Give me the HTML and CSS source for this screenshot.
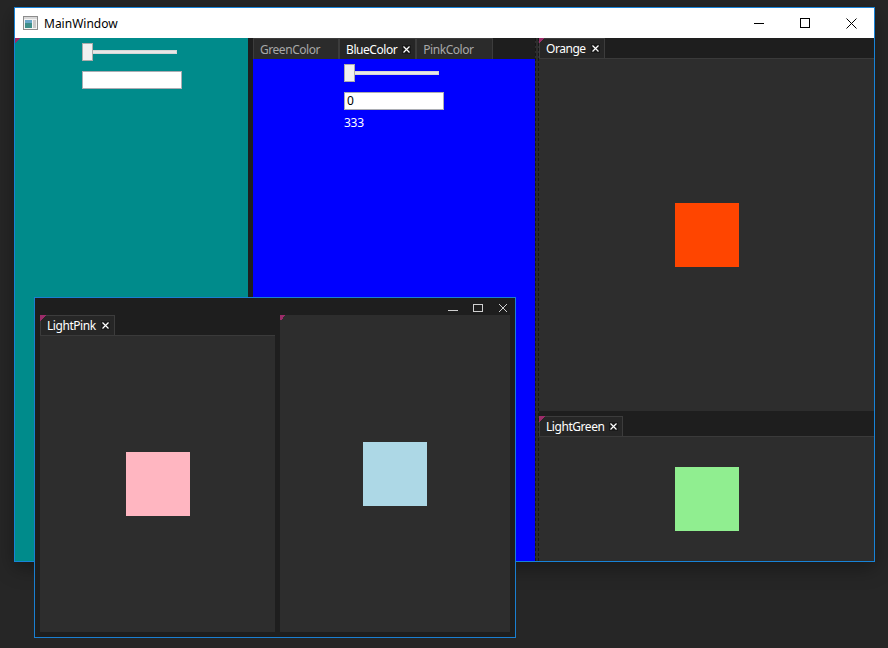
FILE: index.html
```html
<!DOCTYPE html>
<html>
<head>
<meta charset="utf-8">
<title>MainWindow</title>
<link rel="stylesheet" href="styles.css">
</head>
<body>
<div class="win main">
  <div class="titlebar">
    <svg class="app-icon" width="15" height="14" viewBox="0 0 15 14">
      <rect x="0.5" y="0.5" width="14" height="13" fill="#f4f4f4" stroke="#8c8c8c"/>
      <rect x="1" y="1" width="13" height="2" fill="#d8d8d8"/>
      <rect x="2" y="4" width="7" height="8" fill="#3f8f8a"/>
      <rect x="2" y="4" width="7" height="3" fill="#6aa7c9"/>
      <rect x="10" y="4" width="3" height="8" fill="#c9c9c9"/>
    </svg>
    <span class="title">MainWindow</span>
    <div class="caption">
      <div class="cbtn"><svg width="10" height="10" viewBox="0 0 10 10"><line x1="0" y1="5.5" x2="10" y2="5.5" stroke="#000" stroke-width="1"/></svg></div>
      <div class="cbtn"><svg width="10" height="10" viewBox="0 0 10 10"><rect x="0.5" y="0.5" width="9" height="9" fill="none" stroke="#000" stroke-width="1"/></svg></div>
      <div class="cbtn"><svg width="11" height="11" viewBox="0 0 11 11"><path d="M0.5 0.5 L10.5 10.5 M10.5 0.5 L0.5 10.5" stroke="#000" stroke-width="1"/></svg></div>
    </div>
  </div>
  <div class="content">
    <div class="pane teal">
      <span class="marker"></span>
      <div class="slider"><span class="thumb"></span><span class="track"></span></div>
      <div class="textbox"></div>
    </div>
    <div class="mid">
      <div class="tabstrip">
        <div class="tab"><span>GreenColor</span><span class="x"><svg width="7" height="7" viewBox="0 0 7 7"><path d="M0.5 0.5 L6.5 6.5 M6.5 0.5 L0.5 6.5" stroke="#fff" stroke-width="1.2"/></svg></span></div>
        <div class="tab active"><span>BlueColor</span><span class="x"><svg width="7" height="7" viewBox="0 0 7 7"><path d="M0.5 0.5 L6.5 6.5 M6.5 0.5 L0.5 6.5" stroke="#fff" stroke-width="1.2"/></svg></span></div>
        <div class="tab"><span>PinkColor</span><span class="x"><svg width="7" height="7" viewBox="0 0 7 7"><path d="M0.5 0.5 L6.5 6.5 M6.5 0.5 L0.5 6.5" stroke="#fff" stroke-width="1.2"/></svg></span></div>
      </div>
      <div class="blue">
        <div class="slider"><span class="thumb"></span><span class="track"></span></div>
        <div class="textbox">0</div>
        <div class="value">333</div>
      </div>
    </div>
    <div class="splitter"></div>
    <div class="rightcol">
      <div class="dock dock-top">
        <span class="marker"></span>
        <div class="dstrip">
          <div class="tab active"><span>Orange</span><span class="x"><svg width="7" height="7" viewBox="0 0 7 7"><path d="M0.5 0.5 L6.5 6.5 M6.5 0.5 L0.5 6.5" stroke="#fff" stroke-width="1.2"/></svg></span></div>
        </div>
        <div class="dbody"><div class="sq orange"></div></div>
      </div>
      <div class="dock dock-bottom">
        <span class="marker"></span>
        <div class="dstrip">
          <div class="tab active"><span>LightGreen</span><span class="x"><svg width="7" height="7" viewBox="0 0 7 7"><path d="M0.5 0.5 L6.5 6.5 M6.5 0.5 L0.5 6.5" stroke="#fff" stroke-width="1.2"/></svg></span></div>
        </div>
        <div class="dbody"><div class="sq lightgreen"></div></div>
      </div>
    </div>
  </div>
</div>

<div class="win float">
  <div class="ftitle">
    <div class="fbtn"><svg width="10" height="10" viewBox="0 0 10 10"><line x1="0" y1="8.5" x2="10" y2="8.5" stroke="#d0d0d0" stroke-width="1"/></svg></div>
    <div class="fbtn"><svg width="10" height="10" viewBox="0 0 10 10"><rect x="0.5" y="2.5" width="9" height="7" fill="none" stroke="#d0d0d0" stroke-width="1"/></svg></div>
    <div class="fbtn"><svg width="10" height="10" viewBox="0 0 10 10"><path d="M1 2 L9 10 M9 2 L1 10" stroke="#d0d0d0" stroke-width="1"/></svg></div>
  </div>
  <div class="fbody">
    <div class="dock fleft">
      <span class="marker"></span>
      <div class="dstrip">
        <div class="tab active"><span>LightPink</span><span class="x"><svg width="7" height="7" viewBox="0 0 7 7"><path d="M0.5 0.5 L6.5 6.5 M6.5 0.5 L0.5 6.5" stroke="#fff" stroke-width="1.2"/></svg></span></div>
      </div>
      <div class="dbody"><div class="sq lightpink"></div></div>
    </div>
    <div class="dock fright">
      <span class="marker"></span>
      <div class="dbody"><div class="sq lightblue"></div></div>
    </div>
  </div>
</div>
</body>
</html>
```

FILE: styles.css
```css
* { box-sizing: border-box; }

body {
  margin: 0;
  width: 888px;
  height: 648px;
  overflow: hidden;
  position: relative;
  background: #262626;
  font-family: "Noto Sans", "Open Sans", sans-serif;
  font-size: 12px;
  letter-spacing: -0.25px;
}

.win {
  position: absolute;
  border: 1px solid #1883d7;
  background: #1e1e1e;
  display: flex;
  flex-direction: column;
}

.main {
  left: 14px;
  top: 7px;
  width: 861px;
  height: 555px;
  box-shadow: 0 6px 18px rgba(0, 0, 0, 0.35);
}

.titlebar {
  height: 30px;
  flex: none;
  background: #fff;
  display: flex;
  align-items: center;
}

.app-icon { margin-left: 8px; }

.title {
  margin-left: 6px;
  color: #000;
  letter-spacing: 0;
}

.caption {
  margin-left: auto;
  display: flex;
  height: 100%;
}

.cbtn {
  width: 46px;
  display: flex;
  align-items: center;
  justify-content: center;
}

.content {
  flex: 1;
  display: flex;
  min-height: 0;
}

.marker {
  position: absolute;
  left: 0;
  top: 0;
  width: 6px;
  height: 6px;
  background: linear-gradient(135deg, #9b2c69 50%, transparent 50%);
  z-index: 2;
}

.teal {
  position: relative;
  width: 233px;
  margin-right: 5px;
  background: #008b8b;
  padding: 5px 0 0 67px;
}

.slider {
  width: 95px;
  height: 18px;
  display: flex;
  align-items: center;
}

.thumb {
  width: 11px;
  height: 18px;
  background: #f0f0f0;
  border: 1px solid #acacac;
}

.track {
  flex: 1;
  height: 4px;
  background: #e7e7e7;
  border: 1px solid #d6d6d6;
  border-left: none;
}

.textbox {
  width: 100px;
  height: 18px;
  margin-top: 10px;
  background: #fff;
  border: 1px solid #abadb3;
  padding-left: 2px;
  line-height: 16px;
  color: #000;
}

.value {
  margin-top: 5px;
  color: #fff;
  line-height: 16px;
}

.mid {
  width: 282px;
  display: flex;
  flex-direction: column;
}

.tabstrip {
  height: 21px;
  flex: none;
  display: flex;
  background: #1e1e1e;
}

.tab {
  display: flex;
  align-items: center;
  gap: 5px;
  padding: 0 4px 0 6px;
  background: #2b2b2b;
  border: 1px solid #3c3c3c;
  border-bottom: none;
  color: #a8a8a8;
  white-space: nowrap;
  letter-spacing: -0.45px;
}

.tab.active {
  color: #fff;
  background: #262626;
}

.tab .x {
  width: 9px;
  height: 9px;
  display: flex;
  align-items: center;
  justify-content: center;
  background: #1a1a1a;
}

.tab:not(.active) .x { visibility: hidden; }

.blue {
  flex: 1;
  background: #0000ff;
  padding: 5px 0 0 91px;
}

.splitter {
  width: 4px;
  background: #2d2d2d;
  border-left: 1px dashed #161616;
  border-right: 1px dashed #161616;
}

.rightcol {
  flex: 1;
  display: flex;
  flex-direction: column;
  gap: 5px;
}

.dock {
  position: relative;
  display: flex;
  flex-direction: column;
}

.dock-top { height: 373px; flex: none; }
.dock-bottom { flex: 1; }

.dstrip {
  height: 21px;
  flex: none;
  display: flex;
  background: #1e1e1e;
  border-bottom: 1px solid #3a3a3a;
}

.dbody {
  flex: 1;
  background: #2d2d2d;
  display: flex;
  align-items: center;
  justify-content: center;
}

.sq { width: 64px; height: 64px; }
.orange { background: #ff4500; }
.lightgreen { background: #90ee90; }
.lightpink { background: #ffb6c1; }
.lightblue { background: #add8e6; }

.float {
  left: 34px;
  top: 297px;
  width: 482px;
  height: 341px;
  border-color: #1a7fd1;
}

.ftitle {
  height: 17px;
  flex: none;
  display: flex;
  justify-content: flex-end;
}

.fbtn {
  width: 25px;
  display: flex;
  align-items: center;
  justify-content: center;
}

.fbody {
  flex: 1;
  display: flex;
  gap: 5px;
  padding: 0 5px 5px 5px;
}

.fleft { width: 235px; }
.fright { flex: 1; }
```
